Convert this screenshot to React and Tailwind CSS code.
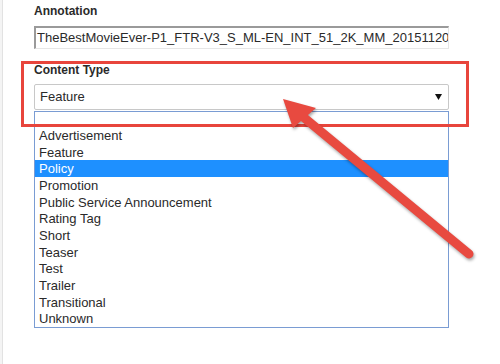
import React from "react";

const items = [
  "Advertisement",
  "Feature",
  "Policy",
  "Promotion",
  "Public Service Announcement",
  "Rating Tag",
  "Short",
  "Teaser",
  "Test",
  "Trailer",
  "Transitional",
  "Unknown",
];

export default function App() {
  return (
    <div
      className="relative flex w-[500px] h-[364px] overflow-hidden bg-white text-[#2a2a2a]"
      style={{ fontFamily: '"Liberation Sans", Arial, sans-serif' }}
    >
      <div className="w-[3px] h-full bg-[#f4f4f4] border-r border-[#e2e2e2]" />
      <div className="flex flex-col pl-[31px] pt-[4px]">
        <div className="h-[14px] leading-[14px] text-[12px] font-bold">Annotation</div>
        <div className="mt-[8px] w-[415px] h-[23px] bg-white border-t-2 border-l-2 border-t-[#9a9a9a] border-l-[#9a9a9a] border-b border-r border-b-[#e6e6e6] border-r-[#e6e6e6] overflow-hidden whitespace-nowrap text-[13px] leading-[20px] pl-[1px]">
          TheBestMovieEver-P1_FTR-V3_S_ML-EN_INT_51_2K_MM_20151120
        </div>
        <div className="mt-[14px] h-[14px] leading-[14px] text-[12px] font-bold">Content Type</div>
        <div className="mt-[7px] w-[415px] h-[26px] flex items-center justify-between border border-[#c8c8c8] rounded-[2px] pl-[5px] pr-[6px] text-[13px]">
          <span>Feature</span>
          <svg width="7" height="6" viewBox="0 0 7 6">
            <polygon points="0,0 7,0 3.5,6" fill="#111" />
          </svg>
        </div>
        <div className="mt-[1px] w-[415px] h-[217px] border border-[#7a9cd3] flex flex-col">
          <div className="h-[16px]" />
          {items.map((t) => (
            <div
              key={t}
              className={
                "h-[16.67px] leading-[18px] text-[13px] pl-[4px] " +
                (t === "Policy" ? "bg-[#1e90ff] text-white" : "")
              }
            >
              {t}
            </div>
          ))}
        </div>
      </div>
      <div className="absolute left-[21px] top-[61px] w-[448px] h-[66px] border-[3px] border-[#e8453c]" />
      <svg
        className="absolute left-0 top-0"
        width="500"
        height="364"
        viewBox="0 0 500 364"
        style={{ filter: "drop-shadow(1px 2px 1.5px rgba(0,0,0,0.35))" }}
      >
        <line x1="302" y1="116" x2="469" y2="254" stroke="#e84a40" strokeWidth="9" strokeLinecap="round" />
        <polygon points="283,99 316,108 293,128" fill="#e84a40" />
      </svg>
    </div>
  );
}
